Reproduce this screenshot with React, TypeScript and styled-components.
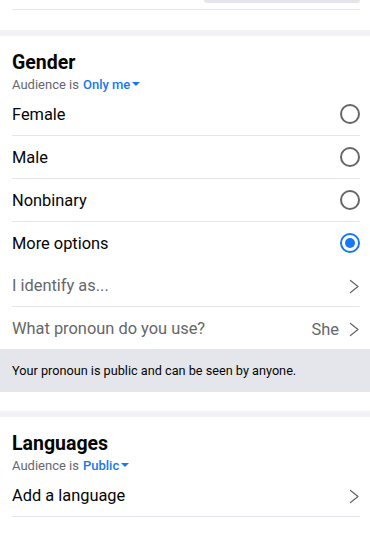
import styled, { createGlobalStyle } from "styled-components";

const GlobalStyle = createGlobalStyle`
  html, body {
    margin: 0;
    padding: 0;
    background: #ffffff;
    font-family: Roboto, "Liberation Sans", Arial, sans-serif;
    color: #050505;
  }
  * { box-sizing: border-box; }
`;

const Page = styled.div`
  width: 370px;
  background: #ffffff;
`;

const PrevSection = styled.div`
  padding: 0 10px 0 12px;
  margin-bottom: 20px;
`;

const PrevField = styled.div`
  height: 10px;
  display: flex;
  justify-content: flex-end;
  border-bottom: 1px solid #e4e6eb;
`;

const PrevInput = styled.div`
  width: 156px;
  height: 3px;
  background: #e4e6eb;
  border-radius: 0 0 8px 8px;
`;

const Band = styled.div`
  height: 6px;
  background: #f0f2f5;
`;

const Section = styled.section`
  padding: 15px 10px 0 12px;
`;

const Title = styled.h2`
  margin: 0;
  font-size: 19.5px;
  line-height: 24px;
  font-weight: 700;
  color: #050505;
`;

const Audience = styled.div`
  display: flex;
  align-items: center;
  margin-top: 2px;
  font-size: 13px;
  line-height: 16px;
  color: #65676b;
`;

const AudienceValue = styled.span`
  display: inline-flex;
  align-items: center;
  margin-left: 4px;
  color: #1877f2;
  font-weight: 500;
`;

const Caret = styled.span`
  width: 0;
  height: 0;
  margin-left: 2px;
  margin-top: -2px;
  border-left: 4px solid transparent;
  border-right: 4px solid transparent;
  border-top: 4px solid #1877f2;
`;

const Row = styled.div<{ divider?: boolean }>`
  display: flex;
  align-items: center;
  justify-content: space-between;
  height: ${({ divider }) => (divider ? "43px" : "42px")};
  border-bottom: ${({ divider }) => (divider ? "1px solid #e4e6eb" : "none")};
`;

const Label = styled.span<{ muted?: boolean }>`
  padding-top: 2px;
  font-size: 16.4px;
  line-height: 20px;
  color: ${({ muted }) => (muted ? "#65676b" : "#050505")};
`;

const RowEnd = styled.span`
  display: flex;
  align-items: center;
  gap: 10px;
  padding-top: 2px;
  font-size: 16.4px;
  color: #65676b;
`;

const Radio = styled.span<{ checked?: boolean }>`
  width: 20px;
  height: 20px;
  border-radius: 50%;
  border: 2px solid ${({ checked }) => (checked ? "#1877f2" : "#65676b")};
  display: flex;
  align-items: center;
  justify-content: center;
  &::after {
    content: "";
    width: 10px;
    height: 10px;
    border-radius: 50%;
    background: ${({ checked }) => (checked ? "#1877f2" : "transparent")};
  }
`;

const Note = styled.div`
  background: #e4e6eb;
  height: 43px;
  display: flex;
  align-items: center;
  padding: 0 12px;
  font-size: 12.7px;
  color: #050505;
  margin-bottom: 19px;
`;

const Chevron = () => (
  <svg width="11" height="15" viewBox="0 0 11 15" fill="none">
    <path
      d="M1.5 1.5 L9 7.5 L1.5 13.5"
      stroke="#65676b"
      strokeWidth="1.3"
      strokeLinecap="round"
      strokeLinejoin="round"
    />
  </svg>
);

export default function App() {
  return (
    <Page>
      <GlobalStyle />
      <PrevSection>
        <PrevField>
          <PrevInput />
        </PrevField>
      </PrevSection>
      <Band />

      <Section>
        <Title>Gender</Title>
        <Audience>
          Audience is
          <AudienceValue>
            Only me
            <Caret />
          </AudienceValue>
        </Audience>
        <Row divider>
          <Label>Female</Label>
          <Radio />
        </Row>
        <Row divider>
          <Label>Male</Label>
          <Radio />
        </Row>
        <Row divider>
          <Label>Nonbinary</Label>
          <Radio />
        </Row>
        <Row>
          <Label>More options</Label>
          <Radio checked />
        </Row>
        <Row divider>
          <Label muted>I identify as...</Label>
          <RowEnd>
            <Chevron />
          </RowEnd>
        </Row>
        <Row>
          <Label muted>What pronoun do you use?</Label>
          <RowEnd>
            She
            <Chevron />
          </RowEnd>
        </Row>
      </Section>
      <Note>Your pronoun is public and can be seen by anyone.</Note>
      <Band />

      <Section>
        <Title>Languages</Title>
        <Audience>
          Audience is
          <AudienceValue>
            Public
            <Caret />
          </AudienceValue>
        </Audience>
        <Row divider>
          <Label>Add a language</Label>
          <RowEnd>
            <Chevron />
          </RowEnd>
        </Row>
      </Section>
    </Page>
  );
}
